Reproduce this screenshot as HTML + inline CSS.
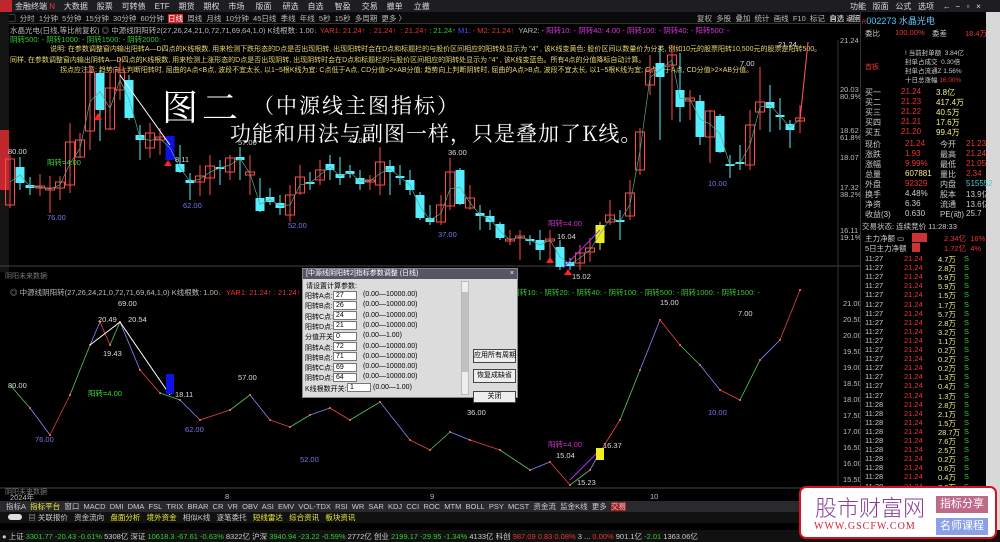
<!DOCTYPE html>
<html><head><meta charset="utf-8"><style>
*{margin:0;padding:0;box-sizing:border-box}
body{width:1000px;height:542px;background:#000;overflow:hidden;position:relative;font-family:"Liberation Sans","Noto Sans CJK SC",sans-serif;font-size:8px;color:#ccc}
.a{position:absolute;white-space:nowrap}
#menu{left:0;top:0;width:1000px;height:12px;background:#1e1e22}
#per{left:0;top:12px;width:860px;height:12px;background:#0a0a0a;border-bottom:1px solid #333}
.tb{left:0;width:860px;height:11px;background:#2a2a2e;font-size:7.5px}
</style></head><body>
<div class="a" id="menu"></div>
<div class="a" style="left:0;top:0;width:12px;height:12px;background:#c0282d"></div>
<div class="a" style="left:15px;top:1px;font-size:8px;color:#ddd">金融终端 <span style="color:#e33">N</span>&nbsp;&nbsp;&nbsp; 大数据&nbsp;&nbsp;&nbsp;&nbsp;股票&nbsp;&nbsp;&nbsp;&nbsp;可转债&nbsp;&nbsp;&nbsp;&nbsp;ETF&nbsp;&nbsp;&nbsp;&nbsp;期货&nbsp;&nbsp;&nbsp;&nbsp;期权&nbsp;&nbsp;&nbsp;&nbsp;市场&nbsp;&nbsp;&nbsp;&nbsp;&nbsp;版面&nbsp;&nbsp;&nbsp;&nbsp;&nbsp;研选&nbsp;&nbsp;&nbsp;&nbsp;自选&nbsp;&nbsp;&nbsp;&nbsp;&nbsp;智盈&nbsp;&nbsp;&nbsp;&nbsp;&nbsp;交易&nbsp;&nbsp;&nbsp;&nbsp;撤单&nbsp;&nbsp;&nbsp;&nbsp;&nbsp;立撤</div>
<div class="a" style="left:850px;top:1px;color:#ddd">功能&nbsp;&nbsp; 版面&nbsp;&nbsp; 公式&nbsp;&nbsp; 选项&nbsp;&nbsp;&nbsp; ←&nbsp; −&nbsp;&nbsp; ▫&nbsp;&nbsp; ×</div>
<div class="a" id="per"></div>
<div class="a" style="left:8px;top:13px;font-size:7.5px;color:#bbb">▢&nbsp; 分时&nbsp; 1分钟&nbsp; 5分钟&nbsp; 15分钟&nbsp; 30分钟&nbsp; 60分钟&nbsp; <span style="background:#c22;color:#fff">日线</span>&nbsp; 周线&nbsp; 月线&nbsp; 10分钟&nbsp; 45日线&nbsp; 季线&nbsp; 年线&nbsp; 5秒&nbsp; 15秒&nbsp; 多周期&nbsp; 更多 〉</div>
<div class="a" style="left:697px;top:13px;font-size:7.5px;color:#bbb">复权&nbsp; 多股&nbsp; 叠加&nbsp; 统计&nbsp; 画线&nbsp; F10&nbsp; 标记&nbsp; 自选&nbsp; 返回</div>
<div class="a" style="left:0;top:12px;width:9px;height:260px;background:#141414"></div>
<div class="a" style="left:0;top:130px;width:9px;height:60px;background:#c0282d"></div>
<div class="a" style="left:10px;top:25px;font-size:7.5px;color:#bbb">水晶光电(日线,等比前复权) ◎ 中源线阴阳转2(27,26,24,21,0,72,71,69,64,1,0) K线根数: 1.00<span style="color:#e33">↓</span> <span style="color:#e33">YAR1: 21.24↑&nbsp; : 21.24↑&nbsp; : 21.24↑</span> <span style="color:#3c3">: 21.24↑</span> <span style="color:#55f">M1:</span> <span style="color:#e33">- M2: 21.24↑</span>&nbsp; YAR2: - <span style="color:#d3d">阳转10: - 阴转40: 4.00 - 阴转100: - 阴转40: - 阳转500: -</span></div>
<div class="a" style="left:10px;top:34px;font-size:7.5px;color:#3c3">阴转500: - 阴转1000: - 阴转1500: - 阴转2000: -</div>
<div class="a" style="left:50px;top:45px;font-size:7px;color:#e8d870;line-height:10px">说明: 在参数调整窗内输出阳转A—D四点的K线根数, 用来检测下跌形态的D点是否出现阳转, 出现阳转时会在D点和标题栏的与股价区间相应的阳转处显示为 "4" , 该K线变黄色: 股价区间以数量价为分类, 例如10元的股票阳转10,500元的股票是阳转500。</div>
<div class="a" style="left:10px;top:55px;font-size:7px;color:#e8d870">同样, 在参数调整窗内输出阴转A—D四点的K线根数, 用来检测上涨形态的D点是否出现阴转, 出现阴转时会在D点和标题栏的与股价区间相应的阴转处显示为 "4" , 该K线变蓝色。所有4点的分值降标自动计算。</div>
<div class="a" style="left:60px;top:65px;font-size:7px;color:#e8d870">拐点应注意: 趋势向上判断阳转时, 屈曲的A点&lt;B点, 波段不宜太长, 以1~5根K线为宜: C点低于A点, CD分值&gt;2×AB分值; 趋势向上判断阴转时, 屈曲的A点&gt;B点, 波段不宜太长, 以1~5根K线为宜; C点高于A点, CD分值&gt;2×AB分值。</div>
<svg class="a" style="left:0;top:0" width="1000" height="542" id="sv"></svg>
<div class="a" style="left:162px;top:80px;font-size:36px;color:#fff;font-family:'Noto Serif CJK SC',serif;letter-spacing:4px">图二</div>
<div class="a" style="left:253px;top:90px;font-size:21px;color:#fff;font-family:'Noto Serif CJK SC',serif;letter-spacing:2px">（中源线主图指标）</div>
<div class="a" style="left:230px;top:118px;font-size:21px;color:#fff;font-family:'Noto Serif CJK SC',serif;letter-spacing:1px">功能和用法与副图一样，只是叠加了K线。</div>
<div class="a" style="left:5px;top:271px;font-size:7px;color:#777">阴阳未来数据</div>
<div class="a" style="left:10px;top:287px;font-size:7.5px;color:#bbb">◎ 中源线阴阳转(27,26,24,21,0,72,71,69,64,1,0) K线根数: 1.00<span style="color:#e33">↓</span>&nbsp; <span style="color:#e33">YAR1: 21.24↑ : 21.24↑ : 21.24↑</span> <span style="color:#3c3">: 21.24↑</span> <span style="color:#e33">: 21.24↑</span> ...<span style="color:#3c3">阳转500: - 阳转1000: - 阳转2000: - 阴转10: - 阴转20: - 阴转40: - 阴转100: - 阴转500: - 阴转1000: - 阴转1500: -</span></div>
<div class="a" style="left:5px;top:487px;font-size:7px;color:#777">阴阳未来数据</div>
<div class="a" style="left:10px;top:492px;font-size:7.5px;color:#bbb">2024年</div>
<div class="a" style="left:225px;top:492px;font-size:7.5px;color:#bbb">8</div>
<div class="a" style="left:430px;top:492px;font-size:7.5px;color:#bbb">9</div>
<div class="a" style="left:650px;top:492px;font-size:7.5px;color:#bbb">10</div>
<div class="a tb" style="top:501px;color:#ccc;padding-left:6px">指标A&nbsp; <span style="color:#ee3">指标平台</span>&nbsp; 窗口&nbsp; MACD&nbsp; DMI&nbsp; DMA&nbsp; FSL&nbsp; TRIX&nbsp; BRAR&nbsp; CR&nbsp; VR&nbsp; OBV&nbsp; ASI&nbsp; EMV&nbsp; VOL-TDX&nbsp; RSI&nbsp; WR&nbsp; SAR&nbsp; KDJ&nbsp; CCI&nbsp; ROC&nbsp; MTM&nbsp; BOLL&nbsp; PSY&nbsp; MCST&nbsp; 资金流&nbsp; 监金K线&nbsp; 更多&nbsp; <span style="background:#a22">交易</span></div>
<div class="a" style="left:0;top:512px;width:860px;height:11px;background:#111;font-size:7.5px;padding-left:8px;color:#ccc"><span style="display:inline-block;width:14px;height:6px;background:#ddd;border-radius:3px"></span>&nbsp;&nbsp; ▤ 关联报价&nbsp;&nbsp; 资金流向&nbsp;&nbsp; <span style="color:#ee3">盘面分析&nbsp;&nbsp; 境外资金</span>&nbsp;&nbsp; 相似K线&nbsp;&nbsp; 逐笔委托&nbsp;&nbsp; <span style="color:#ee3">短线雷达&nbsp;&nbsp; 综合资讯&nbsp;&nbsp; 板块资讯</span></div>
<div class="a" style="left:0;top:530px;width:1000px;height:12px;background:#111;font-size:7.5px;padding:1px 0 0 2px;color:#ccc">● 上证 <span style="color:#3c3">3301.77 -20.43 -0.61%</span> 5308亿 深证 <span style="color:#3c3">10618.3 -67.61 -0.63%</span> 8322亿 沪深 <span style="color:#3c3">3940.94 -23.22 -0.59%</span> 2772亿 创业 <span style="color:#3c3">2199.17 -29.95 -1.34%</span> 4133亿 科创 <span style="color:#e33">987.09 0.83 0.08%</span> 3 ... <span style="color:#e33">0.00%</span> 901.1亿 <span style="color:#3c3">-2.01</span> 1363.06亿</div>
<!-- right panel -->
<div class="a" style="left:860px;top:12px;width:126px;height:518px;background:#000;border-left:1px solid #333"></div>
<div class="a" style="left:986px;top:12px;width:14px;height:518px;background:#d8d8d8"></div>
<div class="a" style="left:862px;top:14px;font-size:9px;color:#4cf"><span style="color:#e33;font-size:6px">R</span>002273 <span style="color:#6cf">水晶光电</span></div>
<div class="a" style="left:830px;top:14px;font-size:7px;color:#ccc">自选 返回</div>
<div id="rp"></div>
<div class="a" style="left:865px;top:62px;width:20px;height:9px;font-size:7px;color:#e33">首板</div>
<div class="a" style="left:862px;top:221px;font-size:7.5px;color:#ccc">交易状态: 连续竞价 11:28:33</div>
<!-- dialog -->
<div class="a" style="left:302px;top:268px;width:216px;height:130px;background:#dcdcdc;border:1px solid #888">
 <div style="height:10px;background:#556;color:#fff;font-size:7px;padding-left:3px;line-height:10px">[中源线阴阳转2]指标参数调整 (日线)<span style="float:right;padding-right:3px">×</span></div>
 <div id="dl" style="position:relative;height:118px;font-size:7px;color:#000"></div>
</div>
<!-- watermark -->
<div class="a" style="left:799px;top:486px;width:198px;height:53px;background:#fff;border:2px solid #d81020;border-radius:7px">
 <div class="a" style="left:14px;top:3px;font-size:22px;color:#8a3c9a;font-family:'Noto Sans CJK SC',sans-serif;font-weight:300">股市财富网</div>
 <div class="a" style="left:13px;top:33px;font-size:10px;color:#d02040;font-family:'Liberation Serif',serif;letter-spacing:1px">WWW.GSCFW.COM</div>
 <div class="a" style="left:135px;top:8px;width:52px;height:17px;background:#c06a8a;color:#fff;font-size:11px;text-align:center;line-height:17px">指标分享</div>
 <div class="a" style="left:135px;top:30px;width:52px;height:17px;background:#8aa0e8;color:#fff;font-size:11px;text-align:center;line-height:17px">名师课程</div>
</div>
<script>
var s='';
function R(x,y,w,h,c,f){s+='<rect x="'+x+'" y="'+y+'" width="'+w+'" height="'+h+'" '+(f?'fill="'+c+'"':'fill="none" stroke="'+c+'"')+'/>';}
function L(x1,y1,x2,y2,c,w){s+='<line x1="'+x1+'" y1="'+y1+'" x2="'+x2+'" y2="'+y2+'" stroke="'+c+'" stroke-width="'+(w||1)+'"/>';}
function T(x,y,t,c){s+='<text x="'+x+'" y="'+y+'" fill="'+c+'" font-size="7.5" font-family="Liberation Sans">'+t+'</text>';}
L(0,266,860,266,'#444');L(0,488,860,488,'#444');L(838,40,838,488,'#333');
var C=[[10,159,205,155,208,'r'],[20,167,183,157,190,'c'],[30,185,188,177,195,'c'],[40,186,188,174,196,'r'],[50,188,190,176,213,'r'],[60,182,188,176,200,'r'],[70,142,185,123,193,'r'],[80,140,157,133,158,'r'],[90,72,131,65,150,'r'],[100,73,110,70,141,'c'],[110,88,129,72,130,'r'],[120,70,90,58,100,'r'],[129,80,118,75,120,'c'],[140,135,140,125,160,'c'],[150,133,148,123,158,'r'],[160,137,140,128,155,'r'],[170,136,160,135,160,'b'],[180,164,172,145,173,'c'],[190,180,183,173,200,'c'],[200,176,182,165,196,'r'],[210,166,178,155,195,'r'],[220,167,169,160,185,'c'],[230,158,172,155,180,'r'],[240,157,160,147,180,'c'],[250,172,175,155,195,'r'],[260,198,211,178,212,'c'],[270,197,202,188,205,'c'],[280,203,208,195,215,'c'],[290,195,215,185,222,'r'],[300,177,193,165,195,'r'],[310,182,184,172,190,'c'],[320,170,180,160,185,'r'],[330,164,170,155,180,'c'],[340,174,178,157,185,'c'],[350,171,174,165,178,'c'],[360,178,184,170,190,'c'],[370,180,182,175,190,'r'],[380,162,185,147,195,'r'],[390,166,172,160,195,'c'],[400,176,178,165,185,'c'],[410,180,190,170,195,'c'],[420,195,218,192,220,'c'],[430,218,222,205,225,'c'],[441,205,222,195,225,'r'],[450,172,206,158,210,'r'],[460,170,204,168,205,'c'],[470,198,208,185,210,'r'],[480,213,216,205,230,'c'],[490,216,222,210,230,'c'],[500,224,238,222,240,'c'],[510,239,241,230,245,'r'],[520,236,238,230,260,'r'],[530,239,241,235,245,'c'],[540,240,250,230,260,'c'],[550,239,241,230,262,'r'],[560,247,267,240,270,'c'],[570,262,266,258,270,'c'],[580,253,263,245,270,'r'],[590,248,252,238,262,'r'],[600,225,243,222,250,'y'],[610,215,222,200,225,'r'],[620,220,222,210,240,'c'],[630,193,216,180,220,'r'],[640,132,170,128,175,'r'],[650,70,85,55,95,'r'],[660,63,77,47,140,'c'],[672,55,65,45,120,'r'],[680,90,107,53,122,'c'],[690,98,101,90,120,'r'],[700,101,137,95,145,'c'],[710,111,137,110,163,'r'],[720,116,152,114,153,'c'],[730,164,166,155,178,'c'],[740,162,164,145,170,'c'],[750,125,165,110,170,'r'],[760,102,112,67,130,'r'],[770,102,108,85,132,'c'],[780,115,117,98,130,'c'],[790,124,130,120,148,'c'],[800,118,121,105,133,'r']];
var pl=[];
C.forEach(function(k){var x=k[0],col={r:'#ff4a4a',c:'#5ef',b:'#1010e0',y:'#ee2'}[k[5]];
 L(x,k[3],x,k[4],col);var f=k[5]!='r';R(x-4.5,k[1],9,Math.max(1.5,k[2]-k[1]),col,f);pl.push(x+','+((k[1]+k[2])/2));});
s+='<polyline points="'+pl.join(' ')+' 808,43" fill="none" stroke="#5a8" stroke-width="0.7"/>';
L(120,75,170,145,'#fff');L(563,268,600,230,'#a3f');L(800,120,808,42,'#f55');
T(8,154,'80.00','#ddd');T(47,165,'阳转=4.00','#3d3');T(47,220,'76.00','#77e');T(238,145,'57.00','#ddd');T(183,208,'62.00','#77e');T(175,162,'8.11','#ddd');T(348,143,'43.00','#ddd');T(288,228,'52.00','#77e');T(448,155,'36.00','#ddd');T(438,237,'37.00','#77e');T(548,226,'阳转=4.00','#c3c');T(557,239,'16.04','#ddd');T(572,279,'15.02','#ddd');T(740,66,'7.00','#ddd');T(708,186,'10.00','#77e');T(778,47,'21.24','#ddd');
s+='<polygon points="98,113 102,120 94,120" fill="#f22"/><polygon points="168,160 172,166 164,166" fill="#f22"/><polygon points="550,257 554,263 546,263" fill="#f22"/><polygon points="568,269 572,275 564,275" fill="#f22"/>';
[['21.24',43],['20.03',92],['80.9%',99],['18.62',133],['61.8%',140],['18.07',160],['17.32',190],['38.2%',197],['16.11',233],['19.1%',240]].forEach(function(a){T(840,a[1],a[0],'#bbb')});
var P=[[10,385],[30,408],[50,435],[70,395],[90,345],[100,322],[110,345],[120,322],[140,370],[160,393],[180,400],[200,420],[230,410],[250,395],[270,420],[290,427],[310,415],[330,408],[350,420],[380,402],[410,440],[430,450],[450,432],[470,440],[500,450],[530,470],[550,462],[570,485],[590,470],[600,452],[620,420],[640,370],[660,320],[680,345],[700,365],[720,390],[740,400],[760,360],[780,340],[800,290]];
for(var i=1;i<P.length;i++){L(P[i-1][0],P[i-1][1],P[i][0],P[i][1],i%3==0?'#e44':(i%3==1?'#5c5':'#88f'),0.8);s+='<rect x="'+(P[i][0]-1)+'" y="'+(P[i][1]-1)+'" width="2" height="2" fill="#f44"/>';}
L(90,345,120,322,'#fff');L(120,322,170,395,'#fff');L(570,480,600,450,'#a3f');
R(166,374,8,20,'#1010e0',1);R(596,448,8,12,'#ee2',1);
T(8,388,'80.00','#ddd');T(118,306,'69.00','#ddd');T(98,322,'20.49','#ddd');T(128,322,'20.54','#ddd');T(103,356,'19.43','#ddd');T(88,396,'阳转=4.00','#3d3');T(35,442,'76.00','#77e');T(238,380,'57.00','#ddd');T(185,432,'62.00','#77e');T(175,397,'18.11','#ddd');T(300,462,'52.00','#77e');T(382,388,'43.00','#ddd');T(467,415,'36.00','#ddd');T(548,447,'阳转=4.00','#c3c');T(556,458,'15.04','#ddd');T(577,485,'15.23','#ddd');T(660,305,'15.00','#ddd');T(738,316,'7.00','#ddd');T(708,415,'10.00','#77e');T(603,448,'16.37','#ddd');
['21.00','20.50','20.00','19.50','19.00','18.50','18.00','17.50','17.00','16.50','16.00','15.50'].forEach(function(v,i){T(843,306+i*16,v,'#bbb')});
document.getElementById('sv').innerHTML=s;
var h='';function A(x,y,t,c,fs){h+='<div class="a" style="left:'+x+'px;top:'+y+'px;color:'+c+';font-size:'+(fs||7.5)+'px">'+t+'</div>';}
A(865,28,'委比','#ccc');A(895,28,'100.00%','#e33');A(932,28,'委差','#ccc');A(965,28,'18.4万','#e33');
A(905,47,'! 当前封单额&nbsp; 3.84亿','#ccc',6.5);A(905,56,'封单占成交&nbsp; 0.30倍','#ccc',6.5);A(905,65,'封单占流通Z 1.56%','#ccc',6.5);A(905,74,'十日总涨幅 <span style="color:#e33">16.00%</span>','#ccc',6.5);
var bq=[['买一','21.24','3.8亿'],['买二','21.23','417.4万'],['买三','21.22','40.5万'],['买四','21.21','17.6万'],['买五','21.20','99.4万']];
bq.forEach(function(b,i){var y=87+i*10;A(865,y,b[0],'#ccc',8);A(901,y,b[1],'#e33',8);A(936,y,b[2],'#ee8',8)});
var rs=[['现价','21.24','今开','21.23'],['涨跌','1.93','最高','21.24'],['涨幅','9.99%','最低','21.05'],['总量','607881','量比','2.34'],['外盘','92329','内盘','515552'],['换手','4.48%','股本','13.9亿'],['净资','6.36','流通','13.6亿'],['收益(3)','0.630','PE(动)','25.7']];
rs.forEach(function(b,i){var y=139+i*10;A(865,y,b[0],'#ccc',8);A(905,y,b[1],i==3?'#ee8':(i>4?'#ccc':'#e33'),8);A(940,y,b[2],'#ccc',8);A(966,y,b[3],i==4?'#5cc':(i>4?'#ccc':'#e33'),8)});
A(865,233,'主力净额 ▭','#ccc',7.5);A(912,233,'<span style="background:#c33;color:#c33">▬▬</span>','#e33');A(944,233,'2.34亿&nbsp; 16%','#e33');
A(865,243,'5日主力净额','#ccc',7.5);A(912,243,'<span style="background:#c33;color:#c33">▬</span>','#e33');A(944,243,'1.72亿&nbsp; 4%','#e33');
var v=['4.7万','2.8万','5.9万','5.9万','1.5万','1.7万','5.7万','2.8万','3.2万','1.1万','0.2万','0.2万','0.2万','1.3万','0.4万','1.3万','2.8万','2.1万','1.5万','28.7万','7.6万','2.5万','0.2万','0.6万','0.4万','7.2万'];
v.forEach(function(t,i){var y=254+i*9.1;A(865,y,i<16?'11:27':'11:28','#ccc');A(904,y,'21.24','#e33');A(938,y,t,'#ee8');A(964,y,'S','#3c3')});
document.getElementById('rp').innerHTML=h;
var d='';var rows=[['阳转A点','27'],['阳转B点','26'],['阳转C点','24'],['阳转D点','21'],['分值开关','0'],['阴转A点','72'],['阴转B点','71'],['阴转C点','69'],['阴转D点','64'],['K线根数开关','1']];
d+='<div class="a" style="left:3px;top:2px">请设置计算参数:</div>';
rows.forEach(function(r,i){var y=12+i*10.3;d+='<div class="a" style="left:2px;top:'+y+'px">'+r[0]+':</div><div class="a" style="left:'+(r[0].length>4?44:30)+'px;top:'+(y-0.5)+'px;width:24px;height:9px;background:#fff;border:1px solid #777;padding-left:2px">'+r[1]+'</div><div class="a" style="left:'+(r[0].length>4?70:60)+'px;top:'+y+'px">(0.00—'+(i==4||i==9?'1.00':'10000.00')+')</div>'});
d+='<div class="a" style="left:158px;top:2px;width:8px;height:114px;background:#eee;border:1px solid #bbb"><div style="margin-top:10px;height:80px;background:#c0c0c0"></div></div>';
d+='<div class="a" style="left:170px;top:70px;width:43px;height:14px;background:#eee;border:1px solid #444;text-align:center;line-height:12px">应用所有周期</div>';
d+='<div class="a" style="left:170px;top:90px;width:43px;height:14px;background:#eee;border:1px solid #444;text-align:center;line-height:12px">恢复成缺省</div>';
d+='<div class="a" style="left:170px;top:112px;width:43px;height:12px;background:#eee;border:1px solid #444;text-align:center;line-height:10px">关闭</div>';
document.getElementById('dl').innerHTML=d;
</script>
</body></html>
